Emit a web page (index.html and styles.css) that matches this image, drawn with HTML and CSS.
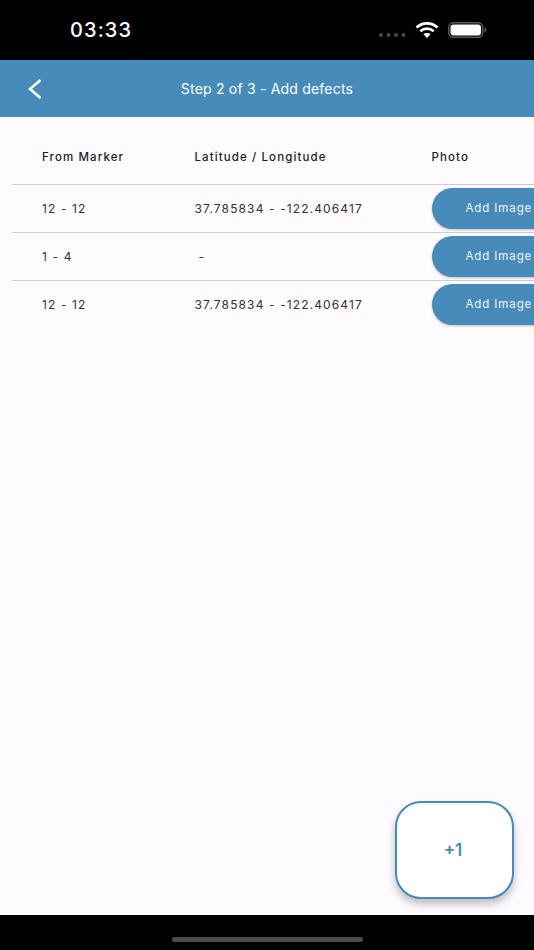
FILE: index.html
```html
<!DOCTYPE html>
<html lang="en">
<head>
<meta charset="utf-8">
<title>Add defects</title>
<link rel="stylesheet" href="styles.css">
</head>
<body>
<div class="screen">
  <div class="status">
    <span class="time">03:33</span>
    <div class="status-icons">
      <svg class="dots" width="28" height="4" viewBox="0 0 28 4"><g fill="#4a4a4a"><circle cx="2" cy="2" r="2"/><circle cx="9.500" cy="2" r="2"/><circle cx="17" cy="2" r="2"/><circle cx="24.500" cy="2" r="2"/></g></svg>
      <svg class="wifi" width="24" height="18" viewBox="0 0 24 18"><g fill="none" stroke="#fff" stroke-width="2.600"><path d="M1.500 6.500C7.500 1 16.500 1 22.500 6.500"/><path d="M5.300 10.200C9.200 6.800 14.800 6.800 18.700 10.200"/></g><path d="M8.300 13.100C10.500 11.500 13.500 11.500 15.700 13.100L12 17Z" fill="#fff"/></svg>
      <svg class="battery" width="39" height="16" viewBox="0 0 39 16"><rect x="0.750" y="0.750" width="34" height="14.500" rx="4.500" fill="none" stroke="#5a5a5a" stroke-width="1.500"/><rect x="2.500" y="2.500" width="30.500" height="11" rx="3" fill="#fff"/><path d="M36.500 5.500C38 6 38.500 7 38.500 8S38 10 36.500 10.500Z" fill="#5a5a5a"/></svg>
    </div>
  </div>
  <header class="bar">
    <svg class="back" width="16" height="22" viewBox="0 0 16 22"><path d="M13.500 2L3 11l10.500 9" fill="none" stroke="#fff" stroke-width="2.600"/></svg>
    <h1 class="title">Step 2 of 3 - Add defects</h1>
  </header>
  <main class="content">
    <div class="table">
      <div class="row head">
        <div class="c1">From Marker</div>
        <div class="c2">Latitude / Longitude</div>
        <div class="c3">Photo</div>
      </div>
      <div class="row">
        <div class="c1">12 - 12</div>
        <div class="c2">37.785834 - -122.406417</div>
        <div class="c3"><button class="add">Add Image</button></div>
      </div>
      <div class="row">
        <div class="c1">1 - 4</div>
        <div class="c2 dash">-</div>
        <div class="c3"><button class="add">Add Image</button></div>
      </div>
      <div class="row">
        <div class="c1">12 - 12</div>
        <div class="c2">37.785834 - -122.406417</div>
        <div class="c3"><button class="add">Add Image</button></div>
      </div>
    </div>
    <button class="fab">+1</button>
  </main>
  <div class="home"><span class="indicator"></span></div>
</div>
</body>
</html>
```
FILE: styles.css
```css
* { box-sizing: border-box; }
html, body { margin: 0; padding: 0; }
body { width: 534px; height: 950px; overflow: hidden; font-family: "Inter", "Liberation Sans", sans-serif; }
.screen { width: 534px; height: 950px; display: flex; flex-direction: column; background: #fefbff; }
.status { height: 60px; background: #000; display: flex; align-items: center; justify-content: space-between; padding: 0 47px 0 70px; }
.time { color: #fff; font-size: 20px; font-weight: 500; letter-spacing: 1.100px; }
.status-icons { display: flex; align-items: center; }
.dots { margin: 9px 8px 0 0; }
.wifi { margin: 0 9px 0 0; }
.battery { display: block; }
.bar { height: 57px; background: #468bb9; display: flex; align-items: center; padding-left: 27px; position: relative; }
.back { display: block; }
.title { position: absolute; left: 0; right: 0; top: 0; bottom: 0; margin: 0; display: flex; align-items: center; justify-content: center; color: #fff; font-size: 14px; font-weight: 400; letter-spacing: 0.2px; }
.content { flex: 1; position: relative; overflow: hidden; padding: 0 0 0 12px; }
.table { width: 522px; font-size: 12px; letter-spacing: 1.120px; color: #333; }
.row { display: flex; align-items: center; height: 48px; border-top: 1px solid #cfcbd3; }
.row.head { height: 67px; border-top: 0; font-weight: 500; font-size: 11.500px; letter-spacing: 1.100px; color: #1c1b1f; padding-top: 12px; }
.c1 { width: 182.500px; padding-left: 30px; flex: none; }
.c2 { width: 237px; flex: none; }
.dash { padding-left: 4px; }
.c3 { flex: none; width: 120px; }
.add { display: block; width: 120px; height: 41px; border: 0; border-radius: 21px; background: #468bb9; color: #f2f6fa; font: 400 11.500px "Inter", "Liberation Sans", sans-serif; letter-spacing: 0.900px; padding: 0 0 2px 34px; text-align: left; box-shadow: 0 1px 3px rgba(0,0,0,.25); white-space: nowrap; }
.fab { position: absolute; left: 395px; top: 684px; width: 119px; height: 98px; border: 2px solid #468bb9; border-radius: 26px; background: #fff; color: #468bb9; font: 600 17px "Inter", "Liberation Sans", sans-serif; padding: 0 3px 0 0; box-shadow: 0 5px 8px rgba(0,0,0,.25); }
.home { height: 35px; background: #000; display: flex; justify-content: center; align-items: flex-start; padding-top: 22px; }
.indicator { width: 191px; height: 5px; border-radius: 3px; background: #4c4c4c; }
```
